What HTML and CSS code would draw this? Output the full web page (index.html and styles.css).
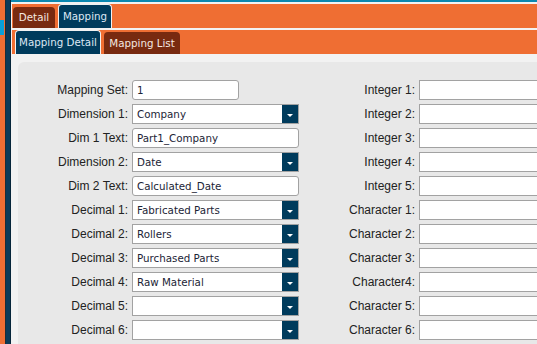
FILE: index.html
```html
<!DOCTYPE html>
<html lang="en">
<head>
    <meta charset="UTF-8">
    <title>Mapping Detail</title>
    <link rel="stylesheet" href="styles.css">
</head>
<body>
<div class="app">
    <div class="side"><div class="side-mark"></div></div>
    <div class="edge"></div>
    <div class="main">
        <div class="topline"></div>

        <!-- Main tabs -->
        <div class="tabbar top">
            <div class="tab tab-detail">Detail</div>
            <div class="tab active tab-mapping">Mapping</div>
        </div>

        <!-- Sub tabs -->
        <div class="tabbar sub">
            <div class="tab active tab-mdetail">Mapping Detail</div>
            <div class="tab tab-mlist">Mapping List</div>
        </div>

        <div class="panel">
            <div class="form-grid">
                <label>Mapping Set:</label>
                <div class="field text short">1</div>
                <label>Integer 1:</label>
                <div class="field plain"></div>

                <label>Dimension 1:</label>
                <div class="field select"><span>Company</span><i class="drop"></i></div>
                <label>Integer 2:</label>
                <div class="field plain"></div>

                <label>Dim 1 Text:</label>
                <div class="field text">Part1_Company</div>
                <label>Integer 3:</label>
                <div class="field plain"></div>

                <label>Dimension 2:</label>
                <div class="field select"><span>Date</span><i class="drop"></i></div>
                <label>Integer 4:</label>
                <div class="field plain"></div>

                <label>Dim 2 Text:</label>
                <div class="field text">Calculated_Date</div>
                <label>Integer 5:</label>
                <div class="field plain"></div>

                <label>Decimal 1:</label>
                <div class="field select"><span>Fabricated Parts</span><i class="drop"></i></div>
                <label>Character 1:</label>
                <div class="field plain"></div>

                <label>Decimal 2:</label>
                <div class="field select"><span>Rollers</span><i class="drop"></i></div>
                <label>Character 2:</label>
                <div class="field plain"></div>

                <label>Decimal 3:</label>
                <div class="field select"><span>Purchased Parts</span><i class="drop"></i></div>
                <label>Character 3:</label>
                <div class="field plain"></div>

                <label>Decimal 4:</label>
                <div class="field select"><span>Raw Material</span><i class="drop"></i></div>
                <label>Character4:</label>
                <div class="field plain"></div>

                <label>Decimal 5:</label>
                <div class="field select"><span></span><i class="drop"></i></div>
                <label>Character 5:</label>
                <div class="field plain"></div>

                <label>Decimal 6:</label>
                <div class="field select"><span></span><i class="drop"></i></div>
                <label>Character 6:</label>
                <div class="field plain"></div>
            </div>
        </div>
    </div>
</div>
</body>
</html>
```

FILE: styles.css
```css
html, body {
    margin: 0;
    height: 100%;
    overflow: hidden;
}
body {
    font-family: "Liberation Sans", Arial, sans-serif;
    background-color: #f2f2f2;
}
.app {
    display: flex;
    height: 100vh;
}
.side {
    width: 5px;
    background-color: #ef6e33;
    padding-top: 20px;
}
.side-mark {
    width: 4px;
    height: 15px;
    background-color: #0aa0d8;
}
.edge {
    width: 4px;
    background-color: #0b3a58;
    border-left: 1px solid #1c2c36;
    border-right: 1px solid #06263b;
}
.main {
    flex: 1;
    display: flex;
    flex-direction: column;
    background-color: #f2f2f2;
    min-width: 0;
}
.topline {
    height: 2px;
    background-color: #0a87b0;
    margin-bottom: 2px;
}
.tabbar {
    height: 24px;
    background-color: #ef6e33;
    margin-left: 1px;
    display: flex;
    align-items: flex-end;
    gap: 3px;
    padding-left: 1px;
}
.tabbar.sub {
    margin-top: 2px;
    padding-left: 3px;
}
.tab {
    box-sizing: border-box;
    font-family: "DejaVu Sans", Tahoma, sans-serif;
    font-size: 10.3px;
    text-align: center;
    background-color: #782a10;
    color: #f4e8e0;
    border-radius: 4px 4px 0 0;
}
.tab.active {
    background-color: #003b5c;
    color: #dde8f4;
    border: 1px solid #f2f2f2;
    border-bottom: none;
}
.tab-detail {
    width: 42px;
    height: 21px;
    line-height: 21px;
}
.tab-mapping {
    width: 54px;
    height: 24px;
    line-height: 22px;
}
.tab-mdetail {
    width: 86px;
    height: 24px;
    line-height: 23px;
}
.tab-mlist {
    width: 76px;
    height: 22px;
    line-height: 22px;
}
.panel {
    flex: 1;
    margin: 8px 0 0 7px;
    background-color: #e8e8e8;
    border-top-left-radius: 6px;
    padding-top: 18px;
    min-width: 0;
}
.form-grid {
    display: grid;
    grid-template-columns: 110px 167px 112px minmax(0, 1fr);
    grid-auto-rows: 20px;
    column-gap: 4px;
    row-gap: 4px;
}
.form-grid label {
    text-align: right;
    font-size: 12px;
    line-height: 20px;
    color: #222;
}
.field {
    box-sizing: border-box;
    height: 20px;
    background-color: #fff;
    border: 1px solid #a2a2a2;
    font-family: "DejaVu Sans", Tahoma, sans-serif;
    font-size: 10.3px;
    line-height: 18px;
    color: #1b2436;
    padding-left: 4px;
}
.field.text {
    border-radius: 3px;
}
.field.short {
    width: 107px;
}
/* right column boxes run off the window edge */
.field.plain {
    border-right: none;
}
.field.select {
    display: flex;
    padding-right: 0;
}
.field.select span {
    flex: 1;
}
.drop {
    width: 16px;
    background-color: #003b5c;
    display: flex;
    align-items: center;
    justify-content: center;
}
.drop::after {
    content: "";
    border-left: 3px solid transparent;
    border-right: 3px solid transparent;
    border-top: 3px solid #fff;
    margin-top: 2px;
}
```
